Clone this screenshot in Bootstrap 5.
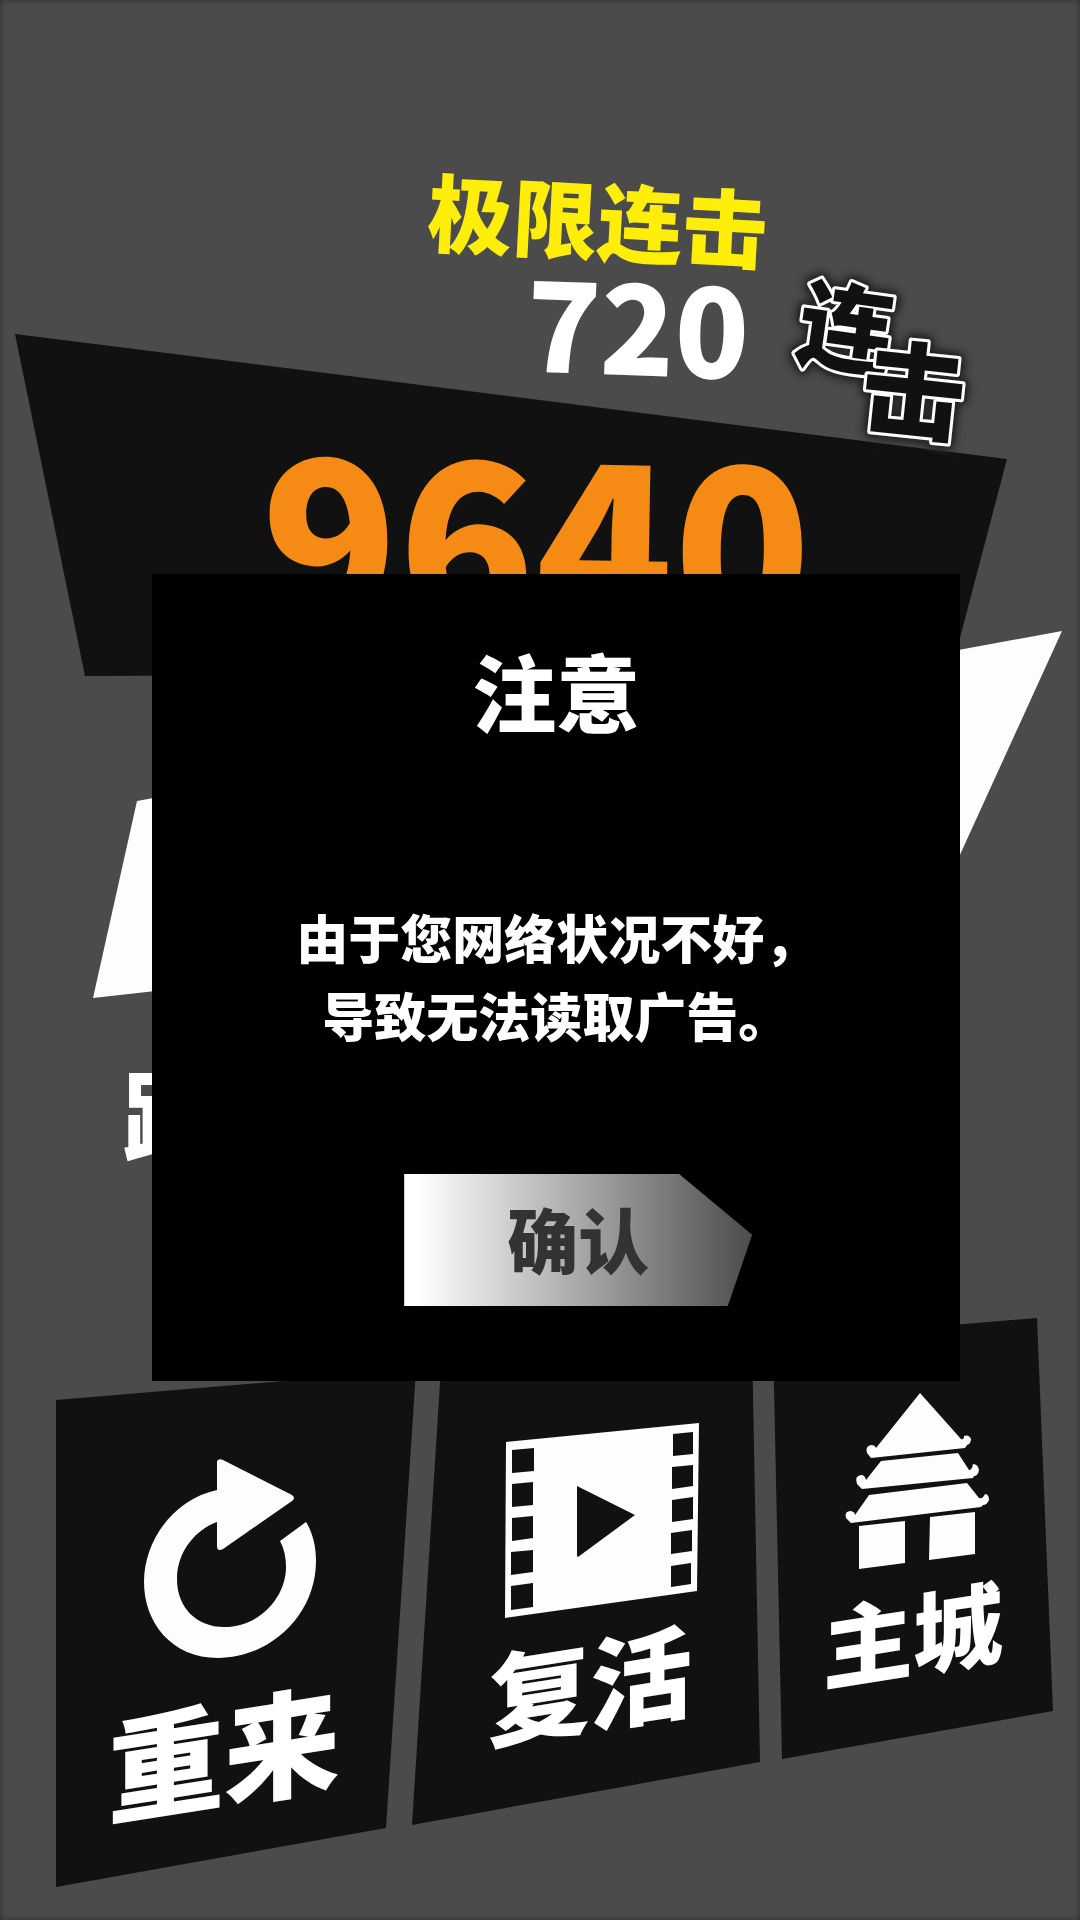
<!DOCTYPE html>
<html lang="zh-CN">
<head>
<meta charset="utf-8">
<meta name="viewport" content="width=device-width, initial-scale=1">
<title>极限连击</title>
<link href="https://cdn.jsdelivr.net/npm/bootstrap@5.3.0/dist/css/bootstrap.min.css" rel="stylesheet">
<style>
  body { background: #4b4b4b; color: #fff; font-family: "Noto Sans CJK SC", sans-serif; font-weight: 900; }
  .scene { isolation: isolate; }
  .backdrop { inset: 0; z-index: -1; }
  .vignette { inset: 0; box-shadow: inset 0 0 6px #2e2e2e; pointer-events: none; }
  .combo-head { padding: 175px 90px 0 0; height: 460px; gap: 10px; }
  .combo-title { color: #ffee0a; font-size: 85px; line-height: 84px; transform: rotate(3deg); }
  .combo-count { font-size: 122px; line-height: 124px; padding-left: 80px; transform: rotate(2deg); }
  .combo-mark { width: 212px; height: 210px; filter: drop-shadow(0 0 4px #222) drop-shadow(0 0 3px #2a2a2a) drop-shadow(0 0 2px #2d2d2d); }
  .combo-mark text { paint-order: stroke; stroke-linejoin: round; fill: #111; stroke: #fff; stroke-width: 6px; }
  .total { color: #f58a15; font-size: 226px; line-height: 148px; height: 570px; padding-right: 8px; transform: rotate(1deg); transform-origin: 50% 74px; }
  .distance { font-size: 98px; line-height: 98px; height: 288px; padding: 32px 0 0 123px; }
  .actions { padding: 0 32px 0 46px; }
  .action { background: none; border: 0; color: inherit; font-weight: inherit; padding: 0; min-width: 0; }
  .action span { display: block; margin-top: 4px; transform: skewY(-9deg); white-space: nowrap; }
  .again { flex: 356 1 0; padding-top: 137px; }
  .again span { font-size: 116px; line-height: 116px; }
  .revive { flex: 376 1 0; padding-top: 97px; }
  .revive span { font-size: 102px; line-height: 102px; }
  .home { flex: 270 1 0; padding-top: 67px; }
  .home span { font-size: 90px; line-height: 90px; }
  .notice { top: 574px; left: 14.1%; width: 74.8%; padding: 72px 24px 75px; background: #000; }
  .notice h1 { font-size: 84px; line-height: 88px; font-weight: 900; margin-bottom: 164px; }
  .notice p { font-size: 52px; line-height: 78px; font-weight: 900; margin-bottom: 120px; }
  .confirm { width: 348px; height: 132px; margin-left: 44px; padding-bottom: 8px; border: 0; color: #333; font-size: 71px; line-height: 72px; font-weight: 900;
    background: linear-gradient(90deg, #fff 4%, #4c4c4c);
    clip-path: polygon(0 0, 79% 0, 100% 46%, 93% 100%, 0 100%); }
</style>
<script src="https://cdn.jsdelivr.net/npm/bootstrap@5.3.0/dist/js/bootstrap.bundle.min.js"></script>
</head>
<body>
<main class="scene position-relative min-vh-100 overflow-hidden">
  <svg class="backdrop position-absolute w-100 h-100" viewBox="0 0 1080 1920" preserveAspectRatio="none" aria-hidden="true">
    <polygon fill="#111" points="15,334 1007,459 951,672 85,676"/>
    <polygon fill="#fdfdfd" points="137,801 1062,631 938,903 93,998"/>
    <polygon fill="#111" points="56,1400 416,1370 386,1828 56,1887"/>
    <polygon fill="#111" points="441,1367 752,1342 760,1762 412,1825"/>
    <polygon fill="#111" points="773,1340 1037,1318 1053,1711 782,1759"/>
  </svg>

  <header class="combo-head d-flex justify-content-end">
    <div class="text-center">
      <div class="combo-title">极限连击</div>
      <div class="combo-count">720</div>
    </div>
    <svg class="combo-mark align-self-end overflow-visible" viewBox="778 250 212 210" role="img" aria-label="连击">
      <text font-size="96" x="798" y="364" transform="rotate(8 846 330)">连</text>
      <text font-size="104" x="862" y="430" transform="rotate(6 914 390)">击</text>
    </svg>
  </header>

  <div class="total text-center">9640</div>
  <div class="distance">距</div>

  <nav class="actions d-flex align-items-start">
    <button type="button" class="action again">
      <svg width="200" height="231" viewBox="124 1455 200 231" fill="#fdfdfd" aria-hidden="true">
        <path d="M217 1461q2-3 6-1l69 35q4 3 0 6l-69 48q-6 3-6-3v-24c-22 8-40 30-40 57 0 29 20 48 47 48 36 0 62-30 62-60q0-15-6-26l26-19c7 11 10 25 10 39 0 54-46 97-98 97-46 0-74-35-74-76 0-43 31-83 73-92z"/>
      </svg>
      <span>重来</span>
    </button>
    <button type="button" class="action revive">
      <svg width="240" height="211" viewBox="470 1415 240 211" aria-hidden="true">
        <polygon fill="#fdfdfd" points="506,1442 699,1423 697,1591 505,1618"/>
        <g fill="#111">
          <path d="M512 1450l22-2v23l-22 2zM512 1484l21-2v23l-21 2zM512 1518l21-2v22l-21 3zM511 1552l22-2v22l-22 3zM511 1586l22-3v24l-22 3z"/>
          <path d="M673 1434l20-2v22l-20 2zM672 1467l21-2v21l-21 3zM672 1500l21-3v22l-21 3zM671 1533l21-3v21l-21 3zM671 1566l20-3v21l-20 3z"/>
          <path d="M577 1486l58 29-57 42-1-1z"/>
        </g>
      </svg>
      <span>复活</span>
    </button>
    <button type="button" class="action home">
      <svg width="180" height="197" viewBox="823 1385 180 197" fill="#fdfdfd" aria-hidden="true">
        <path d="M920 1393l41 46q3 1 3-3 5-2 7 3 0 5-4 6l-2 3-94 10-4-5q-2-7 4-8 4 0 5 3z"/>
        <path d="M881 1461l77-8 11 17q3 0 4-6 5 0 6 6-1 6-5 6l-1 2-111 11-5-5q-3-8 4-9 4 0 5 5z"/>
        <path d="M869 1495l98-12 12 15q4 1 6-4 4 0 4 6-2 5-6 5l-2 2-130 16-5-5q-2-7 5-7 4 1 4 4z"/>
        <path d="M859 1526l46-5v42l-46 6zM930 1517l45-5v42l-46 6z"/>
      </svg>
      <span>主城</span>
    </button>
  </nav>

  <div class="vignette position-absolute"></div>

  <section class="notice position-absolute text-center" role="dialog" aria-labelledby="notice-title">
    <h1 id="notice-title">注意</h1>
    <p>由于您网络状况不好，<br>导致无法读取广告。</p>
    <button type="button" class="confirm">确认</button>
  </section>
</main>
</body>
</html>
